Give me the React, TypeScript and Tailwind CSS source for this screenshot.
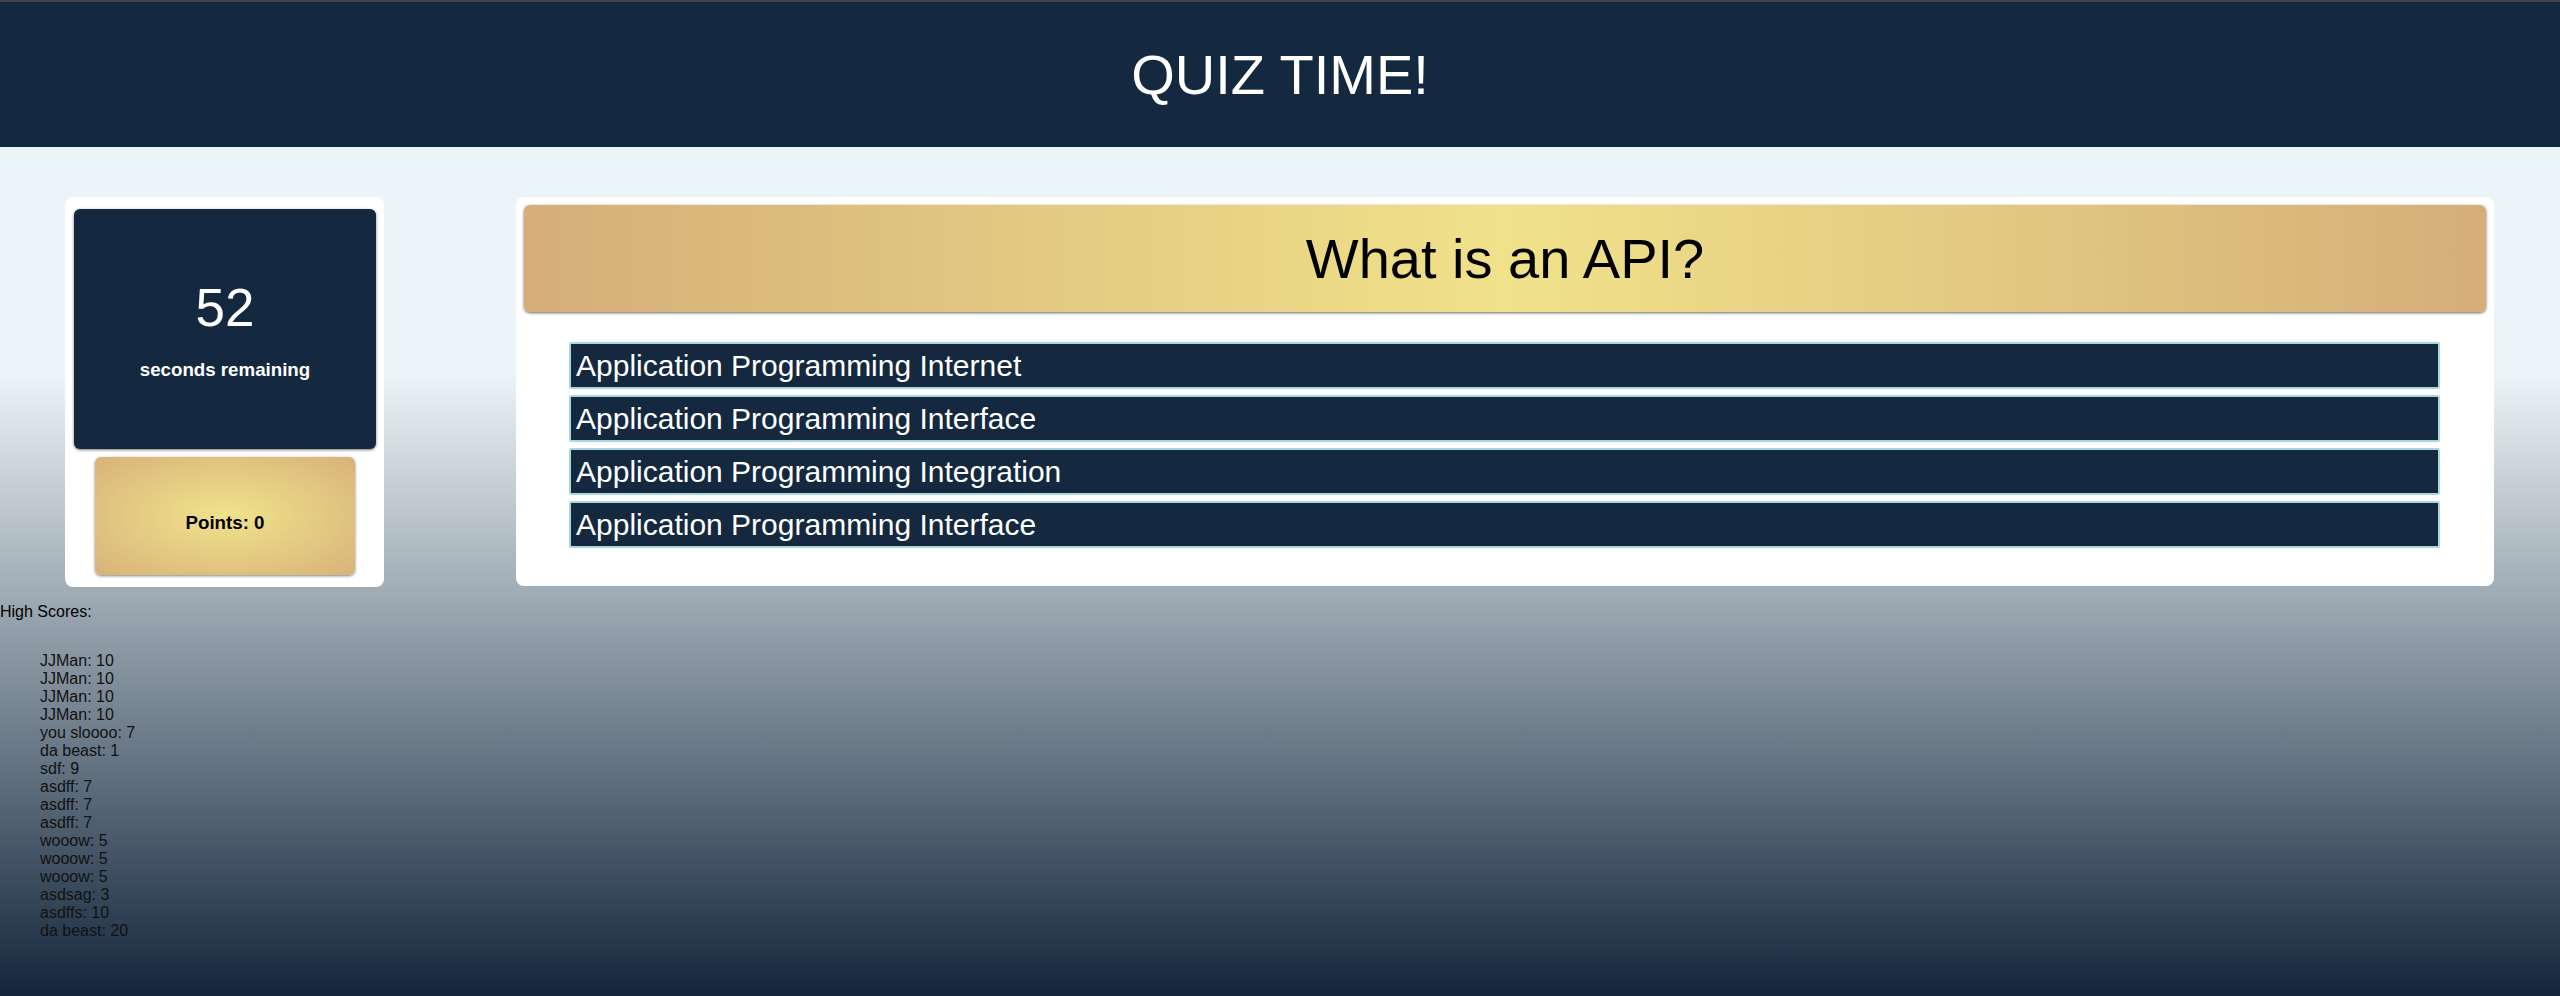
const answers = [
  "Application Programming Internet",
  "Application Programming Interface",
  "Application Programming Integration",
  "Application Programming Interface",
];

const highScores = [
  "JJMan: 10",
  "JJMan: 10",
  "JJMan: 10",
  "JJMan: 10",
  "you sloooo: 7",
  "da beast: 1",
  "sdf: 9",
  "asdff: 7",
  "asdff: 7",
  "asdff: 7",
  "wooow: 5",
  "wooow: 5",
  "wooow: 5",
  "asdsag: 3",
  "asdffs: 10",
  "da beast: 20",
];

function Timer() {
  return (
    <div className="w-[319px] rounded-lg bg-white pb-[12px] pl-[9px] pr-[8px] pt-[12px]">
      <div className="h-[240px] w-[302px] rounded-md bg-[#14293f] pt-[72px] text-center text-white shadow-[0_1px_3px_rgba(0,0,0,0.55)]">
        <div className="text-[53px] leading-none">52</div>
        <h3 className="mt-[27px] text-[18.72px] font-bold leading-none">seconds remaining</h3>
      </div>
      <div className="ml-[21px] mt-[8px] h-[118px] w-[260px] rounded-md bg-[radial-gradient(ellipse_at_center,#f0e38b,#d8b279)] pt-[57px] text-center shadow-[0_1px_3px_rgba(0,0,0,0.5)]">
        <h3 className="text-[18.72px] font-bold leading-none text-black">Points: 0</h3>
      </div>
    </div>
  );
}

function Question() {
  return (
    <div className="flex-1 rounded-lg bg-white px-[8px] pb-[38px] pt-[8px]">
      <div className="flex h-[107px] items-center justify-center rounded-md bg-[linear-gradient(to_right,#d5ae78,#f0e28a_50%,#d5ae78)] shadow-[0_1px_3px_rgba(0,0,0,0.6)]">
        <h2 className="text-[56px] font-normal leading-none text-black">What is an API?</h2>
      </div>
      <ul className="ml-[45px] mr-[46px] mt-[30px] flex flex-col gap-[6px]">
        {answers.map((a, i) => (
          <li
            key={i}
            className="flex h-[47px] cursor-pointer items-center rounded-[2px] border-2 border-[#a9d6df] bg-[#14293f] pl-[5px] text-[30px] leading-none text-white"
          >
            {a}
          </li>
        ))}
      </ul>
    </div>
  );
}

export default function App() {
  return (
    <div className="min-h-screen bg-[linear-gradient(to_bottom,#ebf4f7_37.5%,#14263c)] font-['Liberation_Sans',Arial,sans-serif] text-black">
      <div className="h-[2px] bg-[#444444]" />
      <header className="flex h-[145px] items-center justify-center bg-[#14293f]">
        <h1 className="text-[56px] font-normal leading-none text-white">QUIZ TIME!</h1>
      </header>

      <main className="mt-[50px] flex items-start pl-[65px] pr-[66px]">
        <Timer />
        <div className="ml-[132px] flex flex-1">
          <Question />
        </div>
      </main>

      <section className="mt-[16px] pb-10">
        <p className="text-[16px] leading-[18px]">High Scores:</p>
        <ul className="mt-[31px] pl-10 text-[16px] leading-[18px] text-[#111]">
          {highScores.map((s, i) => (
            <li key={i}>{s}</li>
          ))}
        </ul>
      </section>
    </div>
  );
}
